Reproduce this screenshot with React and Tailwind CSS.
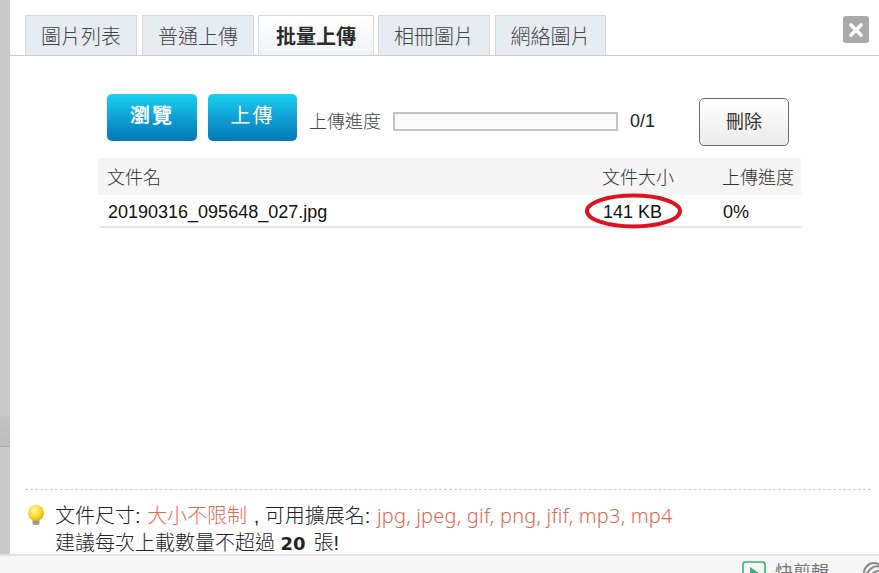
import React from 'react';

const cjk = 'font-["Liberation_Sans","Noto_Sans_CJK_TC",sans-serif]';

const tabs = [
  { label: '圖片列表', cls: 'w-[112px] font-light bg-[#e6ecf2] text-[#444]' },
  { label: '普通上傳', cls: 'w-[112px] ml-[5px] font-light bg-[#e6ecf2] text-[#444]' },
  { label: '批量上傳', cls: 'w-[116px] ml-[4px] font-bold bg-gradient-to-b from-white to-[#eef4f8] text-[#2b2b2b]' },
  { label: '相冊圖片', cls: 'w-[112px] ml-[4px] font-light bg-[#e6ecf2] text-[#444]' },
  { label: '網絡圖片', cls: 'w-[111px] ml-[5px] font-light bg-[#e6ecf2] text-[#444]' },
];

function Bulb() {
  return (
    <svg width="18" height="21" viewBox="0 0 18 21" className="shrink-0 mt-[3px]">
      <defs>
        <radialGradient id="bulb" cx="0.4" cy="0.35" r="0.7">
          <stop offset="0" stopColor="#fff7a8" />
          <stop offset="0.55" stopColor="#fbdc2c" />
          <stop offset="1" stopColor="#dca906" />
        </radialGradient>
      </defs>
      <rect x="5.5" y="14" width="7" height="6" rx="2" fill="#9a9a9a" />
      <circle cx="9" cy="8" r="8" fill="url(#bulb)" />
    </svg>
  );
}

function RedCircle() {
  return (
    <svg width="99" height="37" viewBox="0 0 99 37" className="absolute left-[484px] top-[-2px]">
      <ellipse cx="49.5" cy="18" rx="46.5" ry="15.5" fill="none" stroke="#dc1420" strokeWidth="4" />
    </svg>
  );
}

export default function App() {
  return (
    <div className={`flex flex-col w-[879px] h-[573px] overflow-hidden bg-white text-[#222] ${cjk}`}>
      <div className="flex flex-1 min-h-0">
        {/* page behind the dialog */}
        <div className="w-[10px] shrink-0 flex flex-col bg-[#c9c9c9]">
          <div className="h-[416px] shrink-0" />
          <div className="h-[31px] shrink-0 bg-gradient-to-b from-[#c4c4c4] to-[#bdbdbd] border-b border-[#a8a8a8]" />
        </div>

        <div className="flex-1 min-w-0 overflow-hidden">
          {/* tabs */}
          <div className="flex items-start h-[56px] pt-[15px] pl-[15px] border-b border-[#cccccc]">
            {tabs.map((t) => (
              <div
                key={t.label}
                className={`${t.cls} h-[40px] pt-[3px] flex items-center justify-center border border-b-0 border-[#d6dade] text-[20px]`}
              >
                {t.label}
              </div>
            ))}
            <button className="ml-[237px] mt-[1px] w-[26px] h-[27px] rounded-[3px] bg-[#a9a9a9] flex items-center justify-center">
              <svg width="14" height="14" viewBox="0 0 14 14">
                <path d="M2 2 L12 12 M12 2 L2 12" stroke="#fff" strokeWidth="3.6" strokeLinecap="round" />
              </svg>
            </button>
          </div>

          {/* upload actions */}
          <div className="flex items-start ml-[97px] mt-[38px]">
            <button className="w-[90px] h-[47px] rounded-[5px] bg-gradient-to-b from-[#1bd2f0] via-[#10a0d4] to-[#0678b8] text-white text-[20px] font-bold pb-[3px] tracking-[2px]">
              瀏覽
            </button>
            <button className="ml-[11px] w-[89px] h-[47px] rounded-[5px] bg-gradient-to-b from-[#1bd2f0] via-[#10a0d4] to-[#0678b8] text-white text-[20px] pb-[3px] tracking-[2px]">
              上傳
            </button>
            <span className="ml-[12px] mt-[16px] w-[84px] text-[18px] leading-[24px] text-[#444] font-light">上傳進度</span>
            <div className="mt-[18px] w-[225px] h-[19px] border-2 border-[#c4c4c4] bg-[#fafafa]" />
            <span className="ml-[12px] mt-[15px] w-[69px] text-[18px] leading-[24px]">0/1</span>
            <button className="mt-[4px] w-[90px] h-[48px] rounded-[5px] border border-[#6e6e6e] bg-gradient-to-b from-white to-[#ebebeb] text-[18px] text-[#333]">
              刪除
            </button>
          </div>

          {/* file table */}
          <div className="ml-[88px] mt-[12px] w-[703px]">
            <div className="grid grid-cols-[505px_120px_78px] items-center h-[37px] pt-[3px] bg-[#f5f5f5] text-[18px] text-[#333] font-light">
              <span className="pl-[9px]">文件名</span>
              <span className="-ml-px">文件大小</span>
              <span className="-ml-px">上傳進度</span>
            </div>
            <div className="relative ml-[2px] grid grid-cols-[503px_120px_78px] items-center h-[33px] pt-[3px] border-b-2 border-[#e4e4e4] text-[18px] text-[#111]">
              <span className="pl-[8px]">20190316_095648_027.jpg</span>
              <span>141 KB</span>
              <span>0%</span>
              <RedCircle />
            </div>
          </div>

          {/* hints */}
          <div className="ml-[15px] mt-[261px] w-[846px] border-t border-dashed border-[#cfcfcf] pt-[12px] pl-[2px] flex text-[20px] leading-[27px] text-[#222]">
            <Bulb />
            <div className="ml-[10px] font-light">
              <div>
                文件尺寸: <span className="text-[#de6a55] ml-px mr-px">大小不限制</span> , 可用擴展名:{' '}
                <span className='text-[#e4654e] ml-[1px] tracking-[0.2px] font-["Noto_Sans",sans-serif]'>jpg, jpeg, gif, png, jfif, mp3, mp4</span>
              </div>
              <div>
                建議每次上載數量不超過 <b className='font-bold font-["DejaVu_Sans",sans-serif] text-[18px]'>20</b>
                <span className="ml-[8px]">張!</span>
              </div>
            </div>
          </div>
        </div>
      </div>

      {/* bottom toolbar */}
      <div className="h-[19px] shrink-0 border-t-2 border-[#e2e2e2] bg-[#f6f6f6] flex items-start overflow-hidden pl-[742px] pt-[5px]">
        <svg width="24" height="24" viewBox="0 0 24 24" className="shrink-0">
          <rect x="1" y="1" width="22" height="22" rx="2.5" fill="none" stroke="#2fb47a" strokeWidth="1.6" />
          <path d="M8 6 L17 12 L8 18 Z" fill="#2fb47a" />
        </svg>
        <span className="ml-[9px] text-[18px] leading-[24px] text-[#777] shrink-0">快剪輯</span>
        <svg width="24" height="24" viewBox="0 0 24 24" className="ml-[33px] shrink-0">
          <circle cx="12" cy="12" r="10" fill="none" stroke="#888" strokeWidth="2" />
          <path d="M4 14 C8 6 14 4 20 6 M7 18 C10 11 15 9 21 10" fill="none" stroke="#888" strokeWidth="2" />
        </svg>
      </div>
    </div>
  );
}
